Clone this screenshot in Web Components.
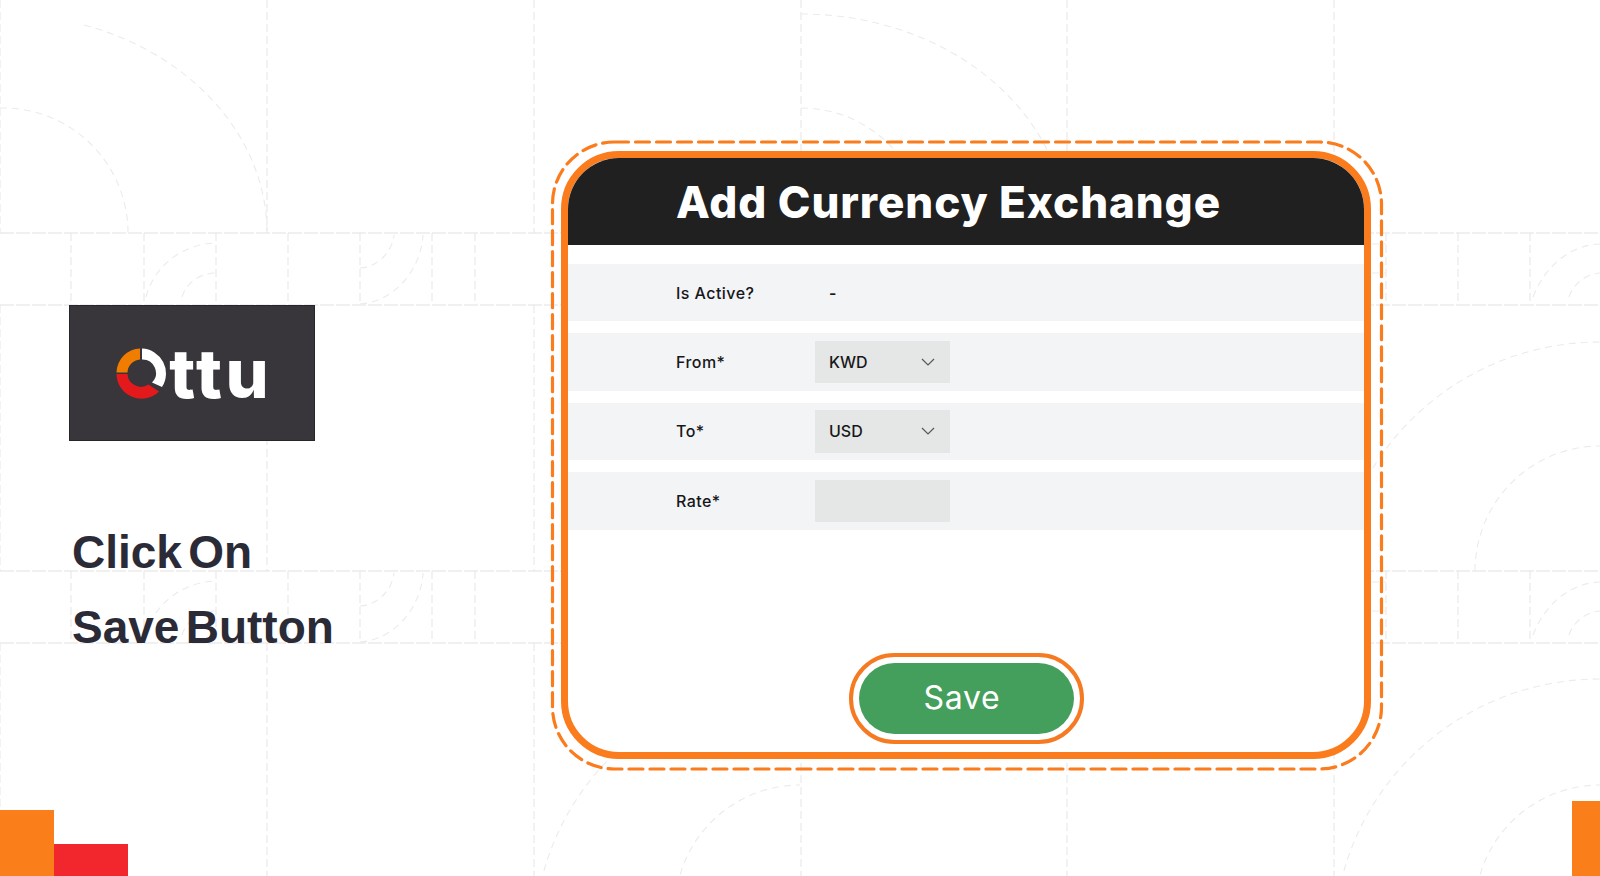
<!DOCTYPE html>
<html>
<head>
<meta charset="utf-8">
<title>Add Currency Exchange</title>
<style>
      html, body { margin: 0; padding: 0; background: #fff; }
</style>
</head>
<body>
<tutorial-slide>
      <div slot="aside">
            <brand-logo></brand-logo>
            <step-caption>
                  <span>Click On</span>
                  <span>Save Button</span>
            </step-caption>
      </div>
      <exchange-card heading="Add Currency Exchange">
            <form-row label="Is Active?"><span class="dash">-</span></form-row>
            <form-row label="From*"><select-box value="KWD"></select-box></form-row>
            <form-row label="To*"><select-box value="USD"></select-box></form-row>
            <form-row label="Rate*"><select-box></select-box></form-row>
            <pill-button slot="actions">Save</pill-button>
      </exchange-card>
</tutorial-slide>

<script>
class GridBackdrop extends HTMLElement {
      constructor() {
            super();
            this._shadowRoot = this.attachShadow({ mode: "open" });
      }
      connectedCallback() {
            // dashed guide lines behind everything
            const horizontals = [233, 305, 571, 643].map(y => `M0 ${y}H1600`).join("");
            const verticals = [0, 267, 534, 801, 1067, 1334].map(x => `M${x} 0V233M${x} 305V571M${x} 643V876`).join("");
            const bandTicks = [71, 144, 216, 288, 360, 432, 475, 1386, 1458, 1530]
                  .map(x => `M${x} 233V305M${x} 571V643`).join("");
            const bandArcs = [0, 338].map(dy => `
                  <g transform="translate(0 ${dy})">
                        <path d="M146 297C154 266 182 244 216 243"/>
                        <path d="M182 297C186 283 200 273 216 273"/>
                        <path d="M360 268C378 267 392 252 394 235"/>
                        <path d="M360 304C394 302 421 270 423 235"/>
                        <path d="M1533 297C1545 266 1570 245 1600 244"/>
                        <path d="M1569 297C1573 284 1586 274 1600 273"/>
                        <path d="M1372 244H1386M1372 273H1386"/>
                  </g>`).join("");
            this._shadowRoot.innerHTML = `
                  <style>
                        :host {
                              position: absolute;
                              inset: 0;
                              display: block;
                              overflow: hidden;
                        }
                        svg { display: block; }
                        .lines { fill: none; stroke: #e7e8e9; stroke-width: 1.1; stroke-dasharray: 8 4; }
                        .rules { fill: none; stroke: #e1e2e3; stroke-width: 1.2; stroke-dasharray: 14 2; }
                        .arcs { fill: none; stroke: #eaebec; stroke-width: 1.1; stroke-dasharray: 7 5; }
                  </style>
                  <svg width="1600" height="876" viewBox="0 0 1600 876">
                        <clipPath id="left"><rect x="81" y="0" width="300" height="240"/></clipPath>
                        <path class="lines" d="${verticals}${bandTicks}"/>
                        <path class="rules" d="${horizontals}"/>
                        <g class="arcs">
                              ${bandArcs}
                              <path clip-path="url(#left)" d="M1 14A266 219 0 0 1 267 233"/>
                              <path d="M0 108A125 125 0 0 1 128 233"/>
                              <path d="M801 14A266 219 0 0 1 1067 233"/>
                              <path d="M801 108A125 125 0 0 1 926 233"/>
                              <path d="M1334 605A266 263 0 0 1 1600 342"/>
                              <path d="M1475 571A125 125 0 0 1 1600 446"/>
                              <path d="M534 942A266 263 0 0 1 800 679"/>
                              <path d="M675 910A125 125 0 0 1 800 785"/>
                              <path d="M1334 942A266 263 0 0 1 1600 679"/>
                              <path d="M1475 910A125 125 0 0 1 1600 785"/>
                        </g>
                  </svg>
            `;
      }
}
customElements.define('grid-backdrop', GridBackdrop);

class CornerBlocks extends HTMLElement {
      constructor() {
            super();
            this._shadowRoot = this.attachShadow({ mode: "open" });
            this._shadowRoot.innerHTML = `
                  <style>
                        :host {
                              position: absolute;
                              inset: 0;
                              display: block;
                              pointer-events: none;
                        }
                        div { position: absolute; bottom: 0; }
                        .orange { left: 0; width: 54px; height: 66px; background: #fa7f1a; }
                        .red { left: 54px; width: 74px; height: 32px; background: #f2272d; }
                        .edge { right: 0; width: 28px; height: 75px; background: #fa7f1a; }
                  </style>
                  <div class="orange"></div>
                  <div class="red"></div>
                  <div class="edge"></div>
            `;
      }
}
customElements.define('corner-blocks', CornerBlocks);

class TutorialSlide extends HTMLElement {
      constructor() {
            super();
            this._shadowRoot = this.attachShadow({ mode: "open" });
            this._shadowRoot.innerHTML = `
                  <style>
                        :host {
                              display: block;
                              position: relative;
                              width: 1600px;
                              height: 876px;
                              overflow: hidden;
                              background: #fff;
                        }
                        .layout {
                              position: relative;
                              display: grid;
                              grid-template-columns: 561px 810px;
                              height: 100%;
                        }
                        .aside { padding: 305px 0 0 69px; }
                        .main { padding-top: 151px; }
                  </style>
                  <grid-backdrop></grid-backdrop>
                  <corner-blocks></corner-blocks>
                  <div class="layout">
                        <div class="aside"><slot name="aside"></slot></div>
                        <div class="main"><slot></slot></div>
                  </div>
            `;
      }
}
customElements.define('tutorial-slide', TutorialSlide);

class BrandLogo extends HTMLElement {
      constructor() {
            super();
            this._shadowRoot = this.attachShadow({ mode: "open" });
            this._shadowRoot.innerHTML = `
                  <style>
                        :host {
                              display: flex;
                              align-items: center;
                              justify-content: center;
                              gap: 3px;
                              box-sizing: border-box;
                              width: 246px;
                              height: 136px;
                              padding-left: 1px;
                              background: #38363b;
                              border: 1px solid #26252a;
                        }
                        svg { display: block; flex: none; }
                        span {
                              color: #fff;
                              font: 800 68px/50px Inter, "Liberation Sans", sans-serif;
                              letter-spacing: 3.5px;
                              height: 50px;
                              margin: -1px -3.5px 0 0;
                        }
                  </style>
                  <svg width="50" height="52" viewBox="0 0 50 52">
                        <path d="M24 1.5A24.5 24.5 0 0 0 0.5 25.5H11.5A13.5 13.5 0 0 1 24 12.5Z" fill="#f07d00"/>
                        <path d="M26 1.5A25 25 0 0 1 46 40L36 35.5A13.5 13.5 0 0 0 26 12.5Z" fill="#fff"/>
                        <path d="M0.5 27H11.5A13.5 13.5 0 0 0 32.5 37.5L43 44.5A25 25 0 0 1 0.5 27Z" fill="#e3191c"/>
                  </svg>
                  <span>ttu</span>
            `;
      }
}
customElements.define('brand-logo', BrandLogo);

class StepCaption extends HTMLElement {
      constructor() {
            super();
            this._shadowRoot = this.attachShadow({ mode: "open" });
            this._shadowRoot.innerHTML = `
                  <style>
                        :host {
                              display: block;
                              margin: 74px 0 0 3px;
                              color: #2b2b38;
                              font: 700 46px/75px "Liberation Sans", Arial, sans-serif;
                              word-spacing: -6.5px;
                        }
                        ::slotted(span) { display: block; }
                  </style>
                  <slot></slot>
            `;
      }
}
customElements.define('step-caption', StepCaption);

class ExchangeCard extends HTMLElement {
      constructor() {
            super();
            this._shadowRoot = this.attachShadow({ mode: "open" });
      }
      connectedCallback() {
            this._shadowRoot.innerHTML = `
                  <style>
                        :host {
                              display: block;
                              position: relative;
                              width: 810px;
                              height: 608px;
                        }
                        .frame {
                              box-sizing: border-box;
                              height: 100%;
                              display: flex;
                              flex-direction: column;
                              border: 7px solid #fa7c1c;
                              border-radius: 58px;
                              background: #fff;
                              overflow: hidden;
                        }
                        header {
                              flex: none;
                              height: 87px;
                              padding-left: 108px;
                              display: flex;
                              align-items: center;
                              background: #202020;
                              color: #fff;
                              font: 800 44px Inter, "Liberation Sans", sans-serif;
                              letter-spacing: 0.9px;
                        }
                        .rows {
                              display: flex;
                              flex-direction: column;
                              gap: 12px;
                              padding-top: 19px;
                        }
                        .actions {
                              margin-top: auto;
                              padding-bottom: 8px;
                              display: flex;
                              justify-content: center;
                        }
                        svg {
                              position: absolute;
                              left: -10px;
                              top: -10px;
                              overflow: visible;
                              pointer-events: none;
                        }
                        rect {
                              fill: none;
                              stroke: #fa7c1c;
                              stroke-width: 3.2;
                              stroke-linecap: round;
                              stroke-dasharray: 14 7;
                        }
                  </style>
                  <div class="frame">
                        <header>${this.getAttribute("heading")}</header>
                        <div class="rows"><slot></slot></div>
                        <div class="actions"><slot name="actions"></slot></div>
                  </div>
                  <svg width="832" height="630" viewBox="0 0 832 630">
                        <rect x="1.5" y="1" width="829" height="627" rx="62" ry="62"/>
                  </svg>
            `;
      }
}
customElements.define('exchange-card', ExchangeCard);

class FormRow extends HTMLElement {
      constructor() {
            super();
            this._shadowRoot = this.attachShadow({ mode: "open" });
      }
      connectedCallback() {
            this._shadowRoot.innerHTML = `
                  <style>
                        :host {
                              display: grid;
                              grid-template-columns: 139px 1fr;
                              align-items: center;
                              height: 57.4px;
                              padding-left: 108px;
                              background: #f3f4f6;
                              color: #17171a;
                              font: 500 16px Inter, "Liberation Sans", sans-serif;
                              letter-spacing: 0.45px;
                        }
                        ::slotted(.dash) { padding-left: 14px; font-weight: 600; }
                  </style>
                  <span>${this.getAttribute("label")}</span>
                  <div><slot></slot></div>
            `;
      }
}
customElements.define('form-row', FormRow);

class SelectBox extends HTMLElement {
      constructor() {
            super();
            this._shadowRoot = this.attachShadow({ mode: "open" });
      }
      connectedCallback() {
            const value = this.getAttribute("value");
            const arrow = `<svg width="14" height="8" viewBox="0 0 14 8"><path d="M1 1L7 7L13 1" fill="none" stroke="#55585a" stroke-width="1.2"/></svg>`;
            this._shadowRoot.innerHTML = `
                  <style>
                        :host {
                              box-sizing: border-box;
                              display: flex;
                              align-items: center;
                              justify-content: space-between;
                              width: 135px;
                              height: 42.5px;
                              padding: 0 15px 0 14px;
                              background: #e5e7e6;
                              color: #17171a;
                              letter-spacing: 0;
                        }
                        svg { display: block; }
                  </style>
                  ${value ? `<span>${value}</span>${arrow}` : ""}
            `;
      }
}
customElements.define('select-box', SelectBox);

class PillButton extends HTMLElement {
      constructor() {
            super();
            this._shadowRoot = this.attachShadow({ mode: "open" });
            this._shadowRoot.innerHTML = `
                  <style>
                        :host {
                              box-sizing: border-box;
                              display: block;
                              width: 235px;
                              height: 91px;
                              padding: 6px;
                              border: 4px solid #f57a22;
                              border-radius: 46px;
                              background: #fff;
                        }
                        button {
                              display: block;
                              box-sizing: border-box;
                              width: 100%;
                              height: 100%;
                              padding: 0 8px 3px 0;
                              border: 0;
                              border-radius: 37px;
                              background: #459f5c;
                              color: #fff;
                              font: 400 32px Inter, "Liberation Sans", sans-serif;
                              letter-spacing: 0.7px;
                        }
                  </style>
                  <button><slot></slot></button>
            `;
      }
}
customElements.define('pill-button', PillButton);
</script>
</body>
</html>
